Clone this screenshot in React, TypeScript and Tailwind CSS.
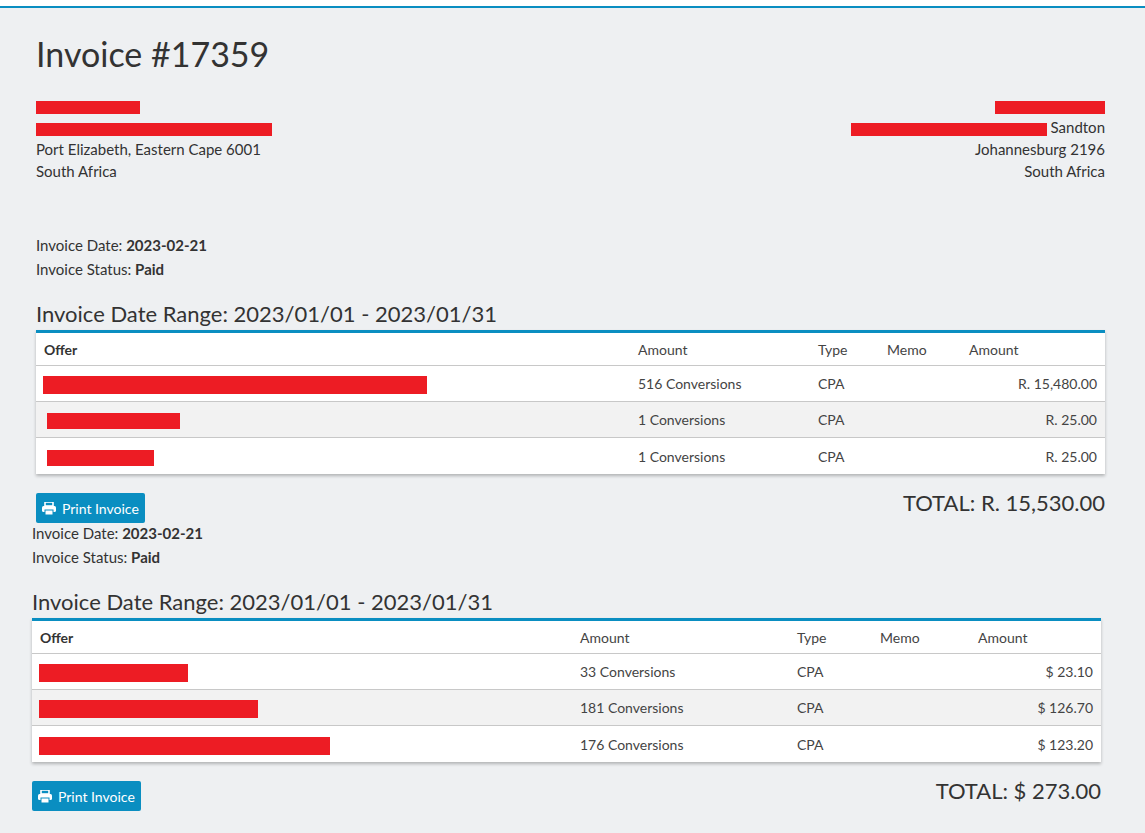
const font = { fontFamily: "Lato, 'Noto Sans', sans-serif" }

function Red({ w, className = "" }: { w: number; className?: string }) {
  return <span className={"inline-block h-[13px] bg-[#ed1c24] align-middle " + className} style={{ width: w }} />
}

type Row = { offer: number; offerPad?: number; amount: string; total: string }

function Block({ rows, total, cols, pl }: { rows: Row[]; total: string; cols: string; pl: string }) {
  return (
    <div className={pl}>
      <div className="text-[15px] text-[#333]">Invoice Date: <b>2023-02-21</b></div>
      <div className="text-[15px] text-[#333] mt-[1px]">Invoice Status: <b>Paid</b></div>
      <h2 className="mt-[21px] text-[22px] leading-[26px] text-[#333]">Invoice Date Range: 2023/01/01 - 2023/01/31</h2>
      <div className="mt-[3px] border-t-[3px] border-[#0a8ec1] bg-white shadow-[0_2px_3px_rgba(0,0,0,0.25)] text-[14px] text-[#444]">
        <div className={"grid h-[33px] items-center border-b border-[#c8c8c8] " + cols}>
          <div className="pl-[8px] font-bold text-[#333]">Offer</div>
          <div>Amount</div>
          <div>Type</div>
          <div>Memo</div>
          <div>Amount</div>
        </div>
        {rows.map((r, i) => (
          <div key={i} className={"grid h-[36px] items-center " + cols + (i % 2 === 1 ? " bg-[#f2f2f2]" : "") + (i < rows.length - 1 ? " border-b border-[#c8c8c8]" : "")}>
            <div className="pl-[7px]"><Red w={r.offer} className={r.offerPad ? "ml-[4px] h-[16px]" : "h-[18px]"} /></div>
            <div>{r.amount}</div>
            <div>CPA</div>
            <div />
            <div className="pr-[8px] text-right">{r.total}</div>
          </div>
        ))}
      </div>
      <div className="mt-[19px] flex items-start justify-between">
        <button className="flex h-[30px] items-center gap-[6px] rounded-[2px] bg-[#0a8ec1] px-[6px] text-[14px] text-white">
          <svg width="14" height="13" viewBox="0 0 14 13" fill="white">
            <rect x="3" y="0" width="8" height="4" fill="none" stroke="white" strokeWidth="1.6" />
            <rect x="0" y="4" width="14" height="6" rx="1.5" />
            <rect x="3" y="8" width="8" height="5" fill="white" stroke="#0a8ec1" strokeWidth="1" />
          </svg>
          Print Invoice
        </button>
        <div className="text-[22px] text-[#333] leading-[24px] mt-[-2px]">TOTAL: {total}</div>
      </div>
    </div>
  )
}

export default function App() {
  return (
    <div style={font} className="min-h-[833px] w-[1145px] bg-white">
      <div className="min-h-[827px] mt-[6px] border-t-2 border-[#0a8ec1] bg-[#eef0f2] pr-[40px]">
        <div className="pl-[36px] pt-[26px]">
          <h1 className="text-[34px] leading-[40px] text-[#333]">Invoice #17359</h1>
          <div className="mt-[20px] flex justify-between text-[15px] leading-[22px] text-[#333]">
            <div>
              <div><Red w={104} /></div>
              <div><Red w={236} /></div>
              <div>Port Elizabeth, Eastern Cape 6001</div>
              <div>South Africa</div>
            </div>
            <div className="text-right">
              <div><Red w={110} /></div>
              <div><Red w={196} /> Sandton</div>
              <div>Johannesburg 2196</div>
              <div>South Africa</div>
            </div>
          </div>
        </div>
        <div className="mt-[52px]">
          <Block
            pl="pl-[36px]"
            cols="grid-cols-[602px_180px_69px_82px_1fr]"
            rows={[
              { offer: 384, amount: "516 Conversions", total: "R. 15,480.00" },
              { offer: 133, offerPad: 1, amount: "1 Conversions", total: "R. 25.00" },
              { offer: 107, offerPad: 1, amount: "1 Conversions", total: "R. 25.00" },
            ]}
            total="R. 15,530.00"
          />
        </div>
        <div className="mt-[-1px] ml-[-4px] mr-[4px]">
          <Block
            pl="pl-[36px]"
            cols="grid-cols-[548px_217px_83px_98px_1fr]"
            rows={[
              { offer: 149, amount: "33 Conversions", total: "$ 23.10" },
              { offer: 219, amount: "181 Conversions", total: "$ 126.70" },
              { offer: 291, amount: "176 Conversions", total: "$ 123.20" },
            ]}
            total="$ 273.00"
          />
        </div>
      </div>
    </div>
  )
}
